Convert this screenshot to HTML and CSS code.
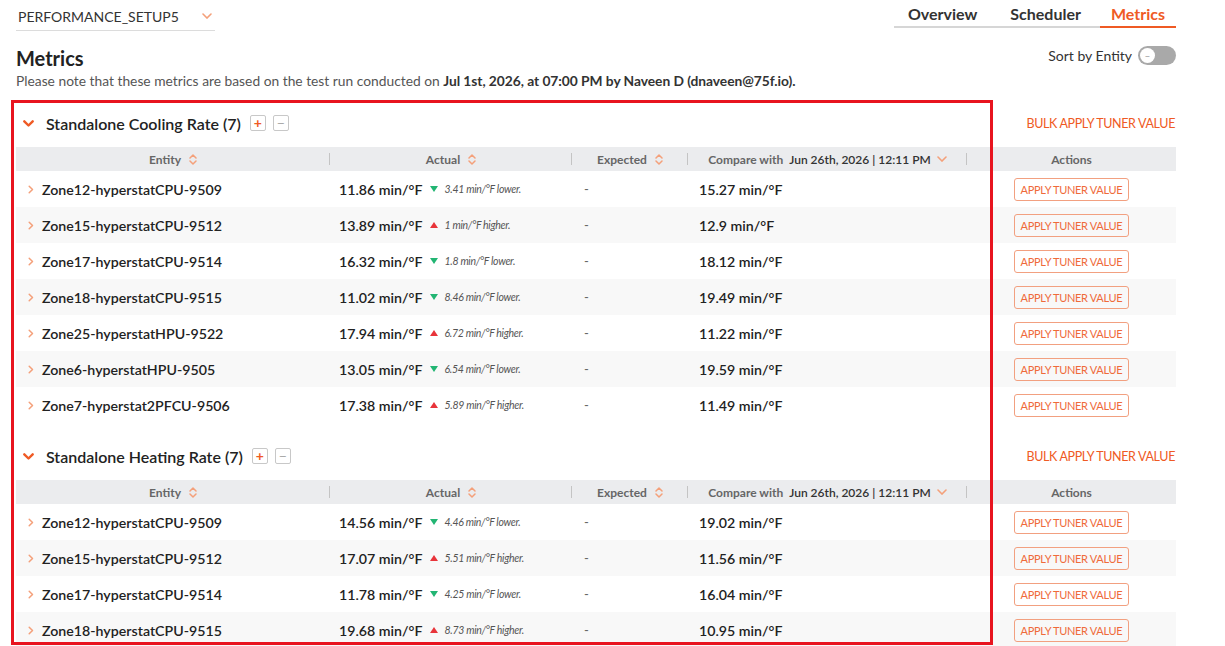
FILE: index.html
```html
<!DOCTYPE html>
<html>
<head>
<meta charset="utf-8">
<link rel="stylesheet" href="styles.css">
</head>
<body>
<div class="page">
  <div class="topbar">
    <div class="site-select">
      <span>PERFORMANCE_SETUP5</span>
      <svg class="sel-chev" width="10" height="6" viewBox="0 0 10 6"><path d="M1 1l4 4 4-4" fill="none" stroke="#f4a07a" stroke-width="1.6" stroke-linecap="round"/></svg>
    </div>
    <div class="tabs">
      <div class="tab">Overview</div>
      <div class="tab">Scheduler</div>
      <div class="tab active">Metrics</div>
    </div>
  </div>

  <div class="title-row">
    <h1 class="title">Metrics</h1>
    <div class="sort">
      <span>Sort by Entity</span>
      <span class="toggle"><span class="knob">–</span></span>
    </div>
  </div>
  <p class="note">Please note that these metrics are based on the test run conducted on <b>Jul 1st, 2026, at 07:00 PM by Naveen D (dnaveen@75f.io).</b></p>

  <div id="sections"></div>
</div>
<div class="highlight"></div>
<script src="app.js"></script>
</body>
</html>
```

FILE: app.js
```js
const sections = [
  { title: "Standalone Cooling Rate (7)", rows: [
    ["Zone12-hyperstatCPU-9509", "11.86", "down", "3.41", "15.27"],
    ["Zone15-hyperstatCPU-9512", "13.89", "up", "1", "12.9"],
    ["Zone17-hyperstatCPU-9514", "16.32", "down", "1.8", "18.12"],
    ["Zone18-hyperstatCPU-9515", "11.02", "down", "8.46", "19.49"],
    ["Zone25-hyperstatHPU-9522", "17.94", "up", "6.72", "11.22"],
    ["Zone6-hyperstatHPU-9505", "13.05", "down", "6.54", "19.59"],
    ["Zone7-hyperstat2PFCU-9506", "17.38", "up", "5.89", "11.49"]
  ]},
  { title: "Standalone Heating Rate (7)", rows: [
    ["Zone12-hyperstatCPU-9509", "14.56", "down", "4.46", "19.02"],
    ["Zone15-hyperstatCPU-9512", "17.07", "up", "5.51", "11.56"],
    ["Zone17-hyperstatCPU-9514", "11.78", "down", "4.25", "16.04"],
    ["Zone18-hyperstatCPU-9515", "19.68", "up", "8.73", "10.95"]
  ]}
];

const sortIcon = '<svg class="sort-ic" width="8" height="11" viewBox="0 0 8 11"><path d="M1 4l3-3 3 3M1 7l3 3 3-3" fill="none" stroke="#f4a07a" stroke-width="1.5" stroke-linecap="round" stroke-linejoin="round"/></svg>';
const downChev = '<svg class="sec-chev" width="11" height="7" viewBox="0 0 11 7"><path d="M1.3 1.3l4.2 4.2 4.2-4.2" fill="none" stroke="#ef5a24" stroke-width="2.4" stroke-linecap="round" stroke-linejoin="round"/></svg>';
const smallChev = '<svg width="10" height="6" viewBox="0 0 10 6"><path d="M1 1l4 4 4-4" fill="none" stroke="#f4a07a" stroke-width="1.6" stroke-linecap="round"/></svg>';
const rowChev = '<svg class="row-chev" width="6" height="9" viewBox="0 0 6 9"><path d="M1.2 1.2l3.3 3.3-3.3 3.3" fill="none" stroke="#f4a07a" stroke-width="1.5" stroke-linecap="round" stroke-linejoin="round"/></svg>';

const root = document.getElementById("sections");
let html = "";
for (const s of sections) {
  html += `<section class="section">
    <div class="sec-head">
      <div class="sec-left">${downChev}<span class="sec-title">${s.title}</span>
        <span class="pm plus">+</span><span class="pm minus">−</span></div>
      <div class="bulk">BULK APPLY TUNER VALUE</div>
    </div>
    <div class="grid head">
      <div class="hc sep">Entity ${sortIcon}</div>
      <div class="hc sep">Actual ${sortIcon}</div>
      <div class="hc sep">Expected ${sortIcon}</div>
      <div class="hc sep">Compare with <span class="cmp-date">Jun 26th, 2026 | 12:11 PM</span> ${smallChev}</div>
      <div class="hc">Actions</div>
    </div>`;
  s.rows.forEach((r) => {
    const dir = r[2];
    html += `<div class="grid row">
      <div class="c entity">${rowChev}<span>${r[0]}</span></div>
      <div class="c actual"><span class="val">${r[1]} min/°F</span><span class="tri ${dir}"></span><span class="diff">${r[3]} min/°F ${dir === "up" ? "higher." : "lower."}</span></div>
      <div class="c expected">-</div>
      <div class="c compare">${r[4]} min/°F</div>
      <div class="c actions"><span class="btn">APPLY TUNER VALUE</span></div>
    </div>`;
  });
  html += `</section>`;
}
root.innerHTML = html;
```

FILE: styles.css
```css
* { box-sizing: border-box; }
html, body { margin: 0; padding: 0; }
body {
  font-family: Lato, "Open Sans", "Liberation Sans", sans-serif;
  color: #333;
  background: #fff;
  width: 1225px;
  height: 646px;
  overflow: hidden;
  position: relative;
}
.page { padding: 0 49px 0 16px; }

.topbar { display: flex; justify-content: space-between; align-items: flex-start; }
.site-select {
  width: 199px; height: 31px;
  border-bottom: 1px solid #dcdcdc;
  display: flex; justify-content: space-between; align-items: center;
  padding: 2px 2px 0 2px;
  font-size: 14px; color: #333;
}
.sel-chev { margin-right: 1px; }
.tabs { display: flex; border-bottom: 2px solid #d6d6d6; margin-left: 0; }
.tab {
  font-size: 16px; font-weight: 700; color: #333;
  padding: 4px 12px 0 12px; line-height: 20px; height: 28px;
  border-bottom: 2px solid transparent; margin-bottom: -2px;
}
.tab:first-child { padding-left: 14px; }
.tab + .tab { margin-left: 9px; }
.tab.active { color: #ef5a24; border-bottom-color: #ef5a24; padding-left: 11px; padding-right: 11px; margin-left: 7px; }

.title-row { display: flex; justify-content: space-between; align-items: flex-start; margin-top: 15px; }
.title { margin: 0; font-size: 20px; font-weight: 700; line-height: 24px; color: #222; }
.sort { display: flex; align-items: center; gap: 6px; font-size: 14px; color: #333; height: 19px; }
.toggle {
  width: 38px; height: 19px; border-radius: 10px; background: #a9a9a9;
  display: flex; align-items: center; padding-left: 2px;
}
.knob {
  width: 15px; height: 15px; border-radius: 50%; background: #fff;
  font-size: 10px; line-height: 15px; text-align: center; color: #999;
}
.note { margin: 2px 0 0 0; font-size: 13.8px; line-height: 18px; color: #555; }
.note b { font-weight: 700; color: #333; letter-spacing: -0.05px; }

.section { margin-top: 18px; }
.sec-head { display: flex; justify-content: space-between; align-items: center; height: 30px; margin-bottom: 9px; }
.sec-left { display: flex; align-items: center; }
.sec-chev { margin-left: 7px; }
.sec-title { font-size: 16px; font-weight: 600; color: #222; margin-left: 12px; }
.pm {
  width: 16px; height: 16px; border: 1px solid #c8c8c8; border-radius: 2px;
  display: inline-flex; align-items: center; justify-content: center;
  font-size: 14px; line-height: 14px; font-weight: 700;
}
.plus { color: #ef5a24; margin-left: 9px; }
.minus { color: #aaa; margin-left: 7px; font-weight: 400; }
.bulk { font-size: 12.5px; color: #ef5a24; letter-spacing: -0.35px; margin-right: 1px; }

.grid { display: grid; grid-template-columns: 314px 242px 116px 279px 209px; }
.head { background: #ebecee; height: 24px; }
.hc {
  display: flex; align-items: center; justify-content: center; gap: 6px;
  font-size: 12px; font-weight: 700; color: #666;
}
.sep {
  background-image: linear-gradient(#c4c4c4, #c4c4c4);
  background-repeat: no-repeat;
  background-size: 1px 12px;
  background-position: right center;
}
.sort-ic { margin-left: 2px; }
.cmp-date { font-weight: 600; color: #333; margin-left: 0; }

.row { height: 36px; }
.row:nth-of-type(even) { background: #f8f8f8; }
.c { display: flex; align-items: center; font-size: 14.2px; color: #222; }
.entity { padding-left: 12px; font-weight: 600; }
.row-chev { margin-right: 8px; }
.actual { padding-left: 9px; font-weight: 600; }
.val { font-weight: 600; }
.tri { width: 0; height: 0; margin: 0 7px 0 7px; border-left: 4.5px solid transparent; border-right: 4.5px solid transparent; }
.tri.down { border-top: 6px solid #22b573; }
.tri.up { border-bottom: 6px solid #e8343a; }
.diff { font-size: 10.5px; font-style: italic; font-weight: 400; color: #555; letter-spacing: -0.3px; }
.expected { padding-left: 12px; color: #666; font-size: 13px; }
.compare { padding-left: 11px; font-weight: 600; }
.actions { justify-content: center; }
.btn {
  width: 115px; height: 23px; border: 1px solid #f2a080; border-radius: 3px;
  display: flex; align-items: center; justify-content: center;
  font-size: 11px; color: #ef6a3a; letter-spacing: -0.3px;
}

.highlight {
  position: absolute; left: 11px; top: 100px; width: 982px; height: 545px;
  border: 3px solid #e8141f; pointer-events: none;
}
```
